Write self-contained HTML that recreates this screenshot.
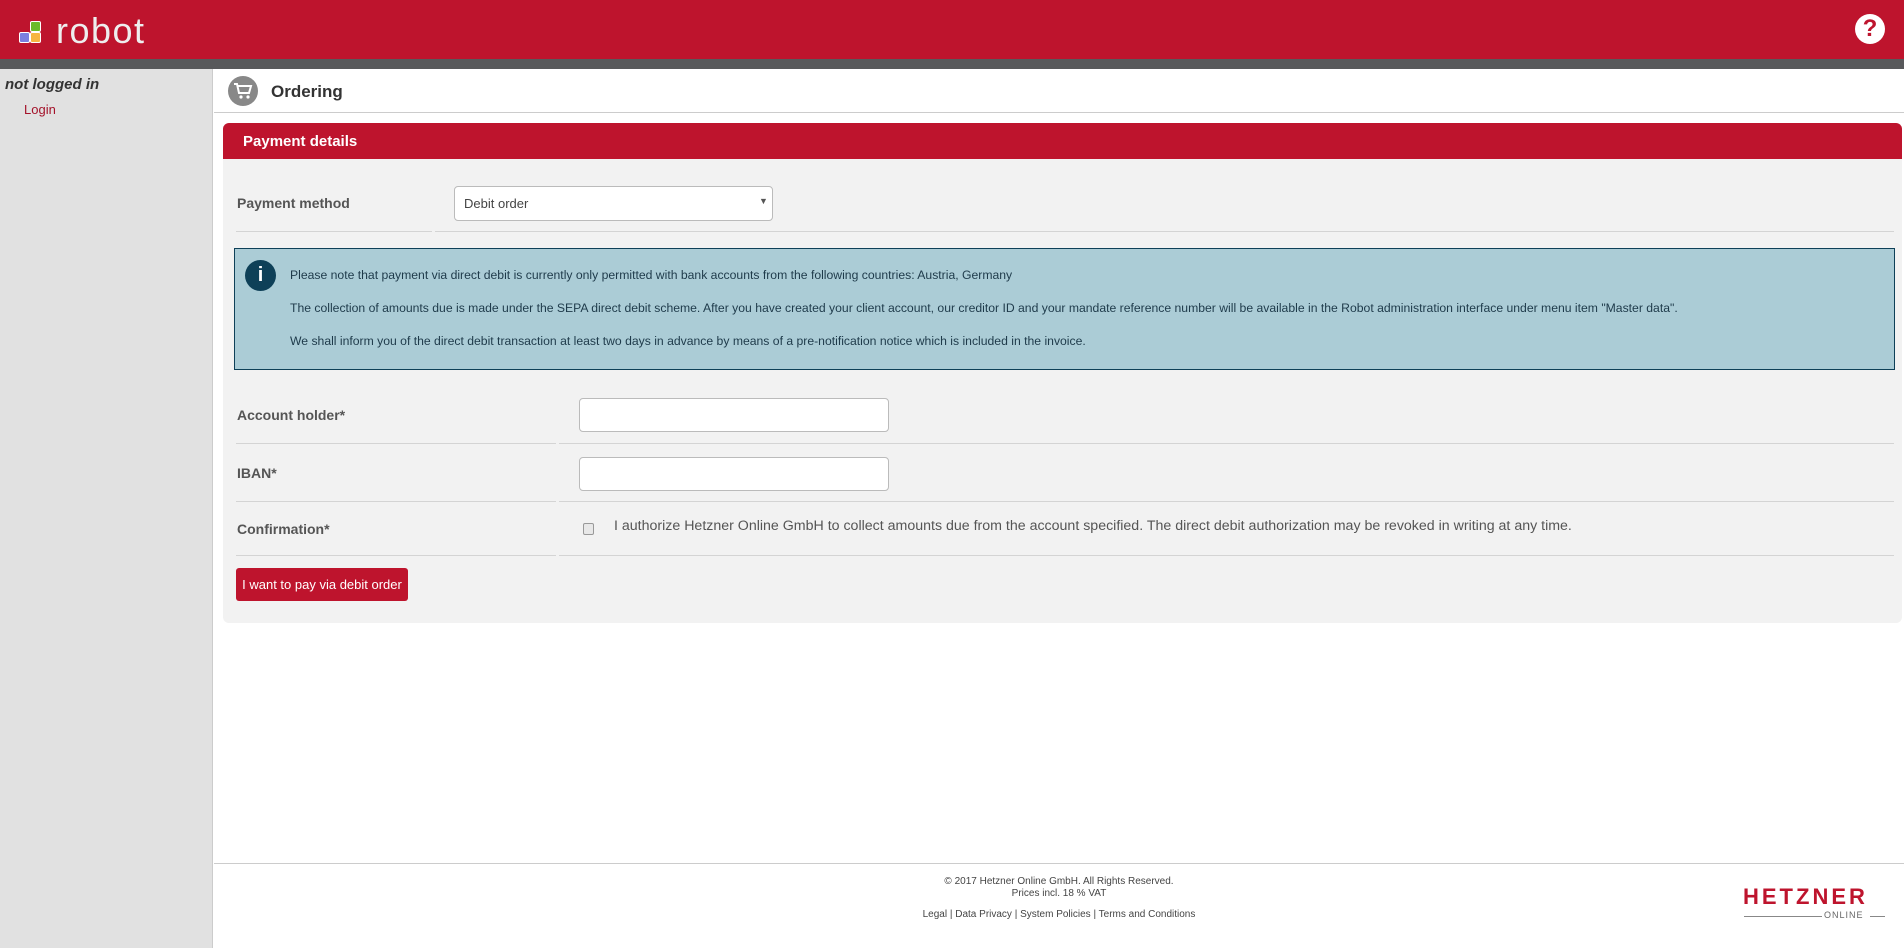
<!DOCTYPE html>
<html><head><meta charset="utf-8"><style>
*{box-sizing:border-box;margin:0;padding:0}
body{width:1904px;height:948px;font-family:"Liberation Sans",Arial,sans-serif;background:#fff;position:relative;overflow:hidden;color:#333}
.abs{position:absolute}
#hdr{left:0;top:0;width:1904px;height:59px;background:#be142d}
#gbar{left:0;top:59px;width:1904px;height:10px;background:#58595b}
#side{left:0;top:69px;width:213px;height:879px;background:#e1e1e1;border-right:1px solid #ccc}
.lbl{font-size:14px;font-weight:bold;color:#555}
.line{height:1px;background:#d4d4d4}
.inp{background:#fff;border:1px solid #bbb;border-radius:4px}
.info{font-size:12.2px;color:#1e3a4a;left:290px}
</style></head><body>
<div id="hdr" class="abs"></div>
<div class="abs" style="left:19px;top:32px;width:11px;height:11px;background:#7b7fe0;border:1px solid #fff;border-radius:2px"></div>
<div class="abs" style="left:30px;top:21px;width:11px;height:11px;background:#6cbb2a;border:1px solid #fff;border-radius:2px"></div>
<div class="abs" style="left:30px;top:32px;width:11px;height:11px;background:#f7b541;border:1px solid #fff;border-radius:2px"></div>
<div class="abs" style="left:56px;top:10px;font-size:36px;color:#eee;letter-spacing:1.5px">robot</div>
<div class="abs" style="left:1855px;top:14px;width:30px;height:30px;border-radius:50%;background:#fff;color:#be142d;font-weight:bold;font-size:24px;text-align:center;line-height:30px">?</div>
<div id="gbar" class="abs"></div>
<div id="side" class="abs"></div>
<div class="abs" style="left:5px;top:76px;font-size:15px;font-weight:bold;font-style:italic;color:#333">not logged in</div>
<div class="abs" style="left:24px;top:102px;font-size:13px;color:#a4122a">Login</div>
<div class="abs" style="left:228px;top:76px;width:30px;height:30px;border-radius:50%;background:#888"></div>
<svg class="abs" style="left:233px;top:82px" width="20" height="18" viewBox="0 0 20 18"><path d="M1 2h3l2 9h10l2-7H5" fill="none" stroke="#fff" stroke-width="2"/><circle cx="8" cy="15" r="1.6" fill="#fff"/><circle cx="15" cy="15" r="1.6" fill="#fff"/></svg>
<div class="abs" style="left:271px;top:82px;font-size:17px;font-weight:bold;color:#333">Ordering</div>
<div class="abs line" style="left:214px;top:112px;width:1690px;background:#ccc"></div>
<div class="abs" style="left:223px;top:123px;width:1679px;height:500px;background:#f2f2f2;border-radius:6px"></div>
<div class="abs" style="left:223px;top:123px;width:1679px;height:36px;background:#be142d;border-radius:6px 6px 0 0"></div>
<div class="abs" style="left:243px;top:133px;font-size:15px;font-weight:bold;color:#fff">Payment details</div>
<div class="abs lbl" style="left:237px;top:195px">Payment method</div>
<div class="abs inp" style="left:454px;top:186px;width:319px;height:35px"></div>
<div class="abs" style="left:464px;top:196px;font-size:13px;color:#444">Debit order</div>
<div class="abs" style="left:759px;top:196px;font-size:9px;color:#555">▼</div>
<div class="abs line" style="left:236px;top:231px;width:196px"></div>
<div class="abs line" style="left:435px;top:231px;width:1459px"></div>
<div class="abs" style="left:234px;top:248px;width:1661px;height:122px;background:#abccd6;border:1px solid #0e4058"></div>
<div class="abs" style="left:245px;top:260px;width:31px;height:31px;border-radius:50%;background:#0e4058;color:#fff;font-weight:bold;font-size:20px;text-align:center;line-height:31px">i</div>
<div class="abs info" style="top:268px">Please note that payment via direct debit is currently only permitted with bank accounts from the following countries: Austria, Germany</div>
<div class="abs info" style="top:301px">The collection of amounts due is made under the SEPA direct debit scheme. After you have created your client account, our creditor ID and your mandate reference number will be available in the Robot administration interface under menu item "Master data".</div>
<div class="abs info" style="top:334px">We shall inform you of the direct debit transaction at least two days in advance by means of a pre-notification notice which is included in the invoice.</div>
<div class="abs lbl" style="left:237px;top:407px">Account holder*</div>
<div class="abs inp" style="left:579px;top:398px;width:310px;height:34px"></div>
<div class="abs line" style="left:236px;top:443px;width:320px"></div>
<div class="abs line" style="left:559px;top:443px;width:1335px"></div>
<div class="abs lbl" style="left:237px;top:465px">IBAN*</div>
<div class="abs inp" style="left:579px;top:457px;width:310px;height:34px"></div>
<div class="abs line" style="left:236px;top:501px;width:320px"></div>
<div class="abs line" style="left:559px;top:501px;width:1335px"></div>
<div class="abs lbl" style="left:237px;top:521px">Confirmation*</div>
<div class="abs" style="left:583px;top:523px;width:11px;height:12px;border:1px solid #999;border-radius:2px;background:#e8e8e8"></div>
<div class="abs" style="left:614px;top:518px;font-size:14.2px;color:#555">I authorize Hetzner Online GmbH to collect amounts due from the account specified. The direct debit authorization may be revoked in writing at any time.</div>
<div class="abs line" style="left:236px;top:555px;width:320px"></div>
<div class="abs line" style="left:559px;top:555px;width:1335px"></div>
<div class="abs" style="left:236px;top:568px;width:172px;height:33px;background:#be142d;border-radius:3px;color:#fff;font-size:13px;text-align:center;line-height:33px">I want to pay via debit order</div>
<div class="abs line" style="left:214px;top:863px;width:1690px;background:#ccc"></div>
<div class="abs" style="left:214px;top:876px;width:1690px;text-align:center;font-size:10px;color:#444;line-height:12px">© 2017 Hetzner Online GmbH. All Rights Reserved.<br>Prices incl. 18 % VAT</div>
<div class="abs" style="left:214px;top:909px;width:1690px;text-align:center;font-size:10px;color:#444">Legal | Data Privacy | System Policies | Terms and Conditions</div>
<div class="abs" style="left:1743px;top:886px;font-size:22px;font-weight:bold;color:#be142d;letter-spacing:3px;line-height:22px">HETZNER</div>
<div class="abs" style="left:1744px;top:916px;width:78px;height:1px;background:#888"></div>
<div class="abs" style="left:1824px;top:910px;font-size:9px;color:#666;letter-spacing:1px">ONLINE</div>
<div class="abs" style="left:1870px;top:916px;width:15px;height:1px;background:#888"></div>
</body></html>
